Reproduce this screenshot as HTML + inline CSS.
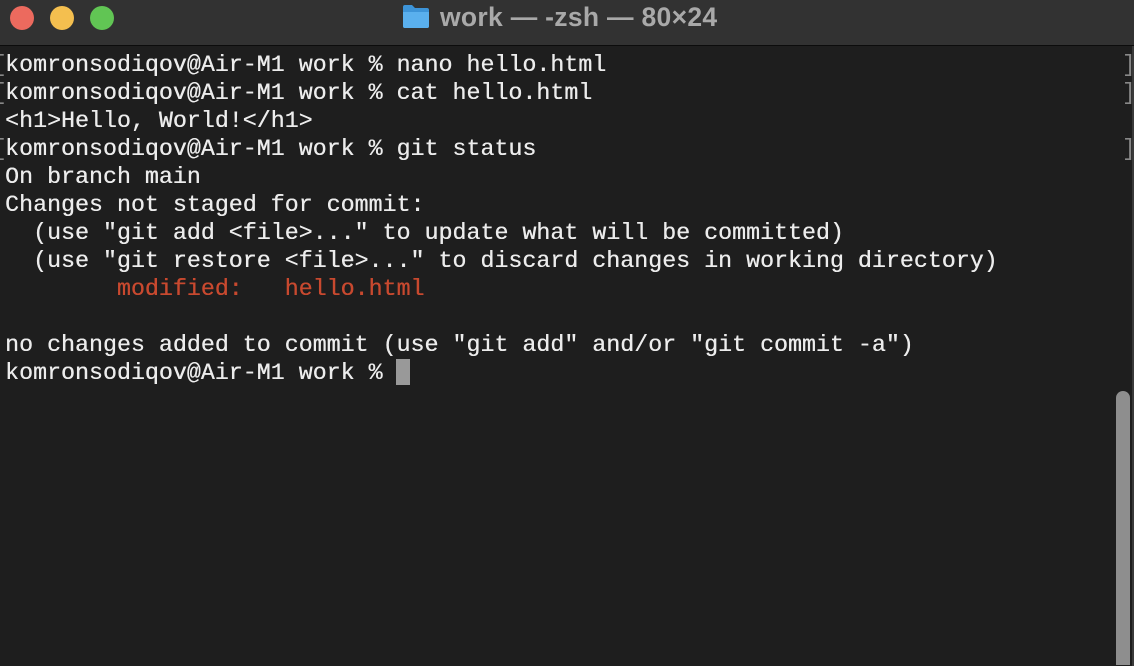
<!DOCTYPE html>
<html><head><meta charset="utf-8"><style>
html,body{margin:0;padding:0;width:1134px;height:666px;overflow:hidden;background:#1e1e1e;position:relative}
.tb{position:absolute;left:0;top:0;width:1134px;height:45px;background:#323232;border-bottom:1px solid #0c0c0c}
.d{position:absolute;top:6px;width:24px;height:24px;border-radius:50%}
.title{position:absolute;left:440px;top:2px;font:bold 26.5px "Liberation Sans",sans-serif;color:#a9a9a9;letter-spacing:0.3px}
.fold{position:absolute;left:402px;top:4px;width:28px;height:25px}
.term{position:absolute;left:5px;top:51px;font:23.3px/28px "Liberation Mono",monospace;color:#ececec;white-space:pre;margin:0;text-shadow:0.3px 0 0 currentColor}
.r{color:#c8492f}
.br{position:absolute;color:#888;font:23px/28px "Liberation Mono",monospace}
.cur{position:absolute;left:396px;top:359px;width:14px;height:26px;background:#999}
.sb{position:absolute;left:1132px;top:46px;width:2px;height:620px;background:#3a3a3a}
.th{position:absolute;left:1116px;top:391px;width:14px;height:274px;border-radius:7px 7px 0 0;background:#8e8e8e}
</style></head><body>
<div class="tb">
<div class="d" style="left:10px;background:#ec6a5e"></div>
<div class="d" style="left:50px;background:#f4bf4f"></div>
<div class="d" style="left:90px;background:#61c554"></div>
<svg class="fold" viewBox="0 0 28 25"><path d="M1 3a2 2 0 0 1 2-2h7l3 3h12a2 2 0 0 1 2 2v16a2 2 0 0 1-2 2H3a2 2 0 0 1-2-2z" fill="#3d94d8"/><path d="M1 8h26v14a2 2 0 0 1-2 2H3a2 2 0 0 1-2-2z" fill="#5ab0ee"/></svg>
<div class="title">work — -zsh — 80×24</div>
</div>
<pre class="term">komronsodiqov@Air-M1 work % nano hello.html
komronsodiqov@Air-M1 work % cat hello.html
&lt;h1&gt;Hello, World!&lt;/h1&gt;
komronsodiqov@Air-M1 work % git status
On branch main
Changes not staged for commit:
  (use "git add &lt;file&gt;..." to update what will be committed)
  (use "git restore &lt;file&gt;..." to discard changes in working directory)
<span class="r">        modified:   hello.html</span>

no changes added to commit (use "git add" and/or "git commit -a")
komronsodiqov@Air-M1 work % </pre>
<div class="br" style="left:-7px;top:51px">[</div>
<div class="br" style="left:-7px;top:79px">[</div>
<div class="br" style="left:-7px;top:135px">[</div>
<div class="br" style="left:1122px;top:51px">]</div>
<div class="br" style="left:1122px;top:79px">]</div>
<div class="br" style="left:1122px;top:135px">]</div>
<div class="cur"></div>
<div class="sb"></div>
<div class="th"></div>
</body></html>
